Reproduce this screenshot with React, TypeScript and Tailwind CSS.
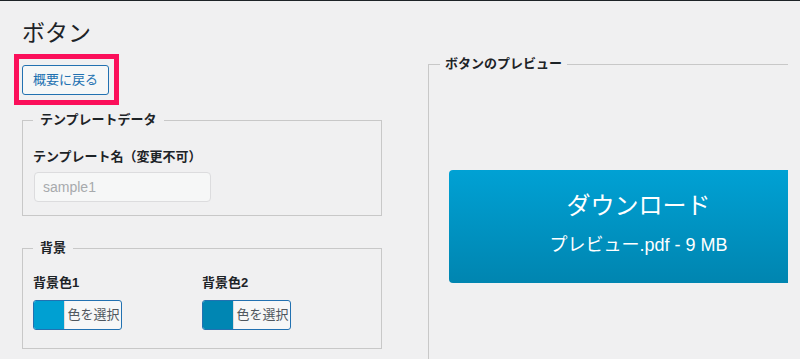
import React from "react";

const jp = "font-['Liberation_Sans','Noto_Sans_CJK_JP',sans-serif]";

function ColorPicker({ label, swatch }: { label: string; swatch: string }) {
    return (
        <div>
            <div className="text-[13px] leading-[20px] font-bold text-[#1d2327]">{label}</div>
            <button className="mt-[7px] flex h-[30px] w-[89px] overflow-hidden rounded-[3px] border border-[#2271b1] bg-[#f6f7f7]">
                <span className={`h-full w-[30px] ${swatch}`} />
                <span className="flex h-full flex-1 items-center justify-center border-l border-[#dcdcde] pl-px text-[13px] text-[#50575e]">
                    色を選択
                </span>
            </button>
        </div>
    );
}

export default function App() {
    return (
        <div className={`h-screen w-full overflow-hidden bg-[#f0f0f1] ${jp}`}>
            <div className="h-px bg-[#1d2327]" />
            <div className="px-[22px] pt-[17px]">
                <h1 className="text-[23px] leading-[30px] font-normal text-[#1d2327]">ボタン</h1>

                <div className="mt-[6px] flex gap-[46px]">
                    {/* left column */}
                    <div className="w-[360px] shrink-0">
                        <div className="relative pt-[11px] pb-[11px]">
                            <button className="h-[30px] w-[87px] rounded-[3px] border border-[#2271b1] bg-[#f6f7f7] text-[13px] text-[#2271b1]">
                                概要に戻る
                            </button>
                            <div className="pointer-events-none absolute top-0 -left-[8px] h-[51px] w-[105px] border-[5px] border-[#fb0f5a]" />
                        </div>

                        <fieldset className="mt-[4px] border border-[#c8c8c8] px-[10px] pb-[13px]">
                            <legend className="px-[7px] text-[13px] leading-[20px] font-semibold text-[#1d2327]">
                                テンプレートデータ
                            </legend>
                            <div className="mt-[17px] text-[13px] leading-[20px] font-bold text-[#1d2327]">
                                テンプレート名（変更不可）
                            </div>
                            <input
                                disabled
                                value="sample1"
                                className="mt-[5px] ml-px h-[30px] w-[177px] rounded-[4px] border border-[#dcdcde] bg-[#f6f7f7] px-[8px] text-[14px] text-[#a7aaad]"
                            />
                        </fieldset>

                        <fieldset className="mt-[22px] border border-[#c8c8c8] px-[10px] pb-[18px]">
                            <legend className="px-[7px] text-[13px] leading-[20px] font-bold text-[#1d2327]">背景</legend>
                            <div className="mt-[15px] grid grid-cols-[169px_1fr]">
                                <ColorPicker label="背景色1" swatch="bg-[#00a0d2]" />
                                <ColorPicker label="背景色2" swatch="bg-[#0086b3]" />
                            </div>
                        </fieldset>
                    </div>

                    {/* right column: preview */}
                    <div className="w-[360px] shrink-0 overflow-hidden">
                        <fieldset className="h-[400px] w-[421px] border border-[#c8c8c8] px-[20px]">
                            <legend className="-ml-[9px] px-[5px] text-[13px] leading-[20px] font-semibold text-[#1d2327]">
                                ボタンのプレビュー
                            </legend>
                            <div className="mt-[96px] flex h-[113px] w-[379px] flex-col items-center rounded-[4px] bg-gradient-to-b from-[#00a1d4] to-[#0085b0] pt-[20px] text-white">
                                <div className="text-[24px] leading-[32px]">ダウンロード</div>
                                <div className="mt-[11px] text-[18px] leading-[24px]">プレビュー.pdf - 9 MB</div>
                            </div>
                        </fieldset>
                    </div>
                </div>
            </div>
        </div>
    );
}
